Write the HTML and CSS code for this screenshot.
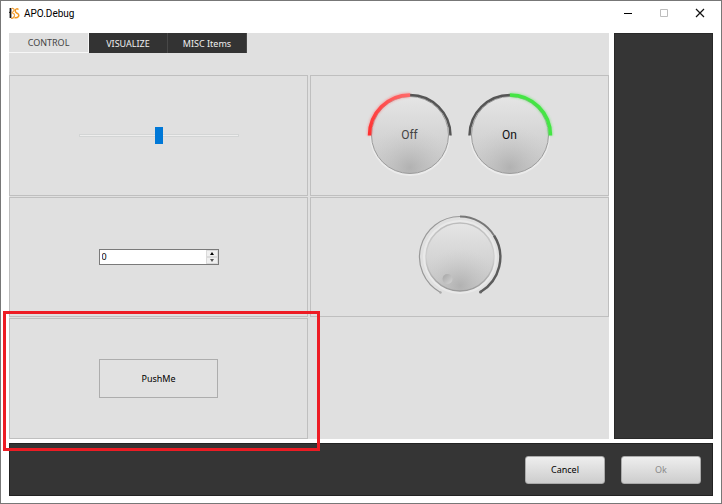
FILE: index.html
```html
<!DOCTYPE html>
<html lang="en">
<head>
<meta charset="utf-8">
<meta name="viewport" content="width=device-width, initial-scale=1">
<title>APO.Debug</title>
<link rel="stylesheet" href="styles.css">
</head>
<body>
<div class="window">
  <header class="titlebar">
    <svg class="logo" width="11" height="13" viewBox="0 0 11 13" aria-hidden="true">
      <path d="M1.500 1v10" stroke="#171717" stroke-width="1.800" fill="none"/>
      <path d="M0 5.500 1.500 5" stroke="#171717"/>
      <path d="M2.500 1.500Q5.500 .8 5 3.500L3 6Q6 6.500 5.500 9 4.500 11.500 2 11.500" fill="none" stroke="#f2a23c" stroke-width="1.200"/>
      <path d="M9.500 2.500Q7.500 1 6.300 3 5.800 5.300 8 6.200 10.500 7.500 9.500 9.500 7.500 11.500 5.500 10.500" fill="none" stroke="#f2981f" stroke-width="1.500"/>
    </svg>
    <h1 class="title">APO.Debug</h1>
    <div class="window-buttons">
      <button class="window-button" aria-label="Minimize"><svg width="10" height="10"><path d="M1 5.500h8" stroke="#000"/></svg></button>
      <button class="window-button" aria-label="Maximize" disabled><svg width="10" height="10"><path d="M1.500 1.500h7v7h-7z" fill="none" stroke="#bdbdbd"/></svg></button>
      <button class="window-button" aria-label="Close"><svg width="10" height="10"><path d="m1 1 8 8M9 1 1 9" stroke="#111" stroke-width="1.200"/></svg></button>
    </div>
  </header>

  <div class="workspace">
    <main class="panel">
      <div class="tabs" role="tablist">
        <button class="tab tab-active" role="tab" aria-selected="true">CONTROL</button>
        <button class="tab" role="tab" aria-selected="false">VISUALIZE</button>
        <button class="tab" role="tab" aria-selected="false">MISC Items</button>
      </div>
      <div class="grid">
        <section class="cell">
          <input class="slider" type="range" min="0" max="100" value="50" aria-label="Value">
        </section>
        <section class="cell cell-knobs">
          <button class="knob knob-off">
            <svg class="knob-art" viewBox="0 0 90 90" aria-hidden="true">
              <defs>
                <linearGradient id="face" x1="0" y1="0" x2="0" y2="1"><stop offset="0" stop-color="#e5e5e5"/><stop offset="1" stop-color="#c5c5c5"/></linearGradient>
                <radialGradient id="shade" cx=".5" cy=".92" r=".55"><stop offset="0" stop-color="#a8a8a8" stop-opacity=".7"/><stop offset="1" stop-color="#c8c8c8" stop-opacity="0"/></radialGradient>
                <linearGradient id="red" x1="0" y1="1" x2="1" y2="0"><stop offset="0" stop-color="#ff3030"/><stop offset="1" stop-color="#ff6868"/></linearGradient>
                <filter id="glow" x="-20%" y="-20%" width="140%" height="140%"><feGaussianBlur stdDeviation="1"/></filter>
              </defs>
              <circle cx="45" cy="46" r="40" fill="#ebebeb"/>
              <circle cx="45" cy="45" r="38.500" fill="url(#face)"/>
              <circle cx="45" cy="45" r="38.500" fill="url(#shade)" stroke="#9c9c9c"/>
              <path d="M45 5a40.500 40.500 0 0 1 40.500 40.500" fill="none" stroke="#555" stroke-width="2.500"/>
              <path d="M4.500 45.500A40.500 40.500 0 0 1 45 5" fill="none" stroke="#ff7070" stroke-width="5" opacity=".5" filter="url(#glow)"/>
              <path d="M4.500 45.500A40.500 40.500 0 0 1 45 5" fill="none" stroke="url(#red)" stroke-width="3.500"/>
            </svg>
            <span class="knob-label">Off</span>
          </button>
          <button class="knob knob-on">
            <svg class="knob-art" viewBox="0 0 90 90" aria-hidden="true">
              <circle cx="45" cy="46" r="40" fill="#ebebeb"/>
              <circle cx="45" cy="45" r="38.500" fill="url(#face)"/>
              <circle cx="45" cy="45" r="38.500" fill="url(#shade)" stroke="#9c9c9c"/>
              <path d="M4.500 45.500A40.500 40.500 0 0 1 45 5" fill="none" stroke="#555" stroke-width="2.500"/>
              <path d="M45 5a40.500 40.500 0 0 1 40.500 40.500" fill="none" stroke="#60e860" stroke-width="5" opacity=".5" filter="url(#glow)"/>
              <path d="M45 5a40.500 40.500 0 0 1 40.500 40.500" fill="none" stroke="#44e544" stroke-width="3.500"/>
            </svg>
            <span class="knob-label">On</span>
          </button>
        </section>
        <section class="cell">
          <div class="spinbox">
            <input class="spin-input" type="number" value="0" aria-label="Number">
            <div class="spin-buttons">
              <button class="spin-button" aria-label="Increase"><svg width="4" height="3"><path d="M0 3 2 0l2 3z" fill="#000"/></svg></button>
              <button class="spin-button" aria-label="Decrease"><svg width="4" height="3"><path d="m0 0 2 3 2-3z" fill="#555"/></svg></button>
            </div>
          </div>
        </section>
        <section class="cell">
          <div class="dial">
            <svg class="dial-art" viewBox="0 0 90 90" aria-hidden="true">
              <defs>
                <linearGradient id="rim" x1="0" y1="0" x2="0" y2="1"><stop offset="0" stop-color="#bcbcbc"/><stop offset=".5" stop-color="#d0d0d0"/><stop offset="1" stop-color="#999"/></linearGradient>
                <linearGradient id="dimple" x1="0" y1="0" x2="1" y2="1"><stop offset="0" stop-color="#a5a5a5"/><stop offset="1" stop-color="#d4d4d4"/></linearGradient>
              </defs>
              <circle cx="45" cy="45" r="37" fill="#e9e9e9"/>
              <circle cx="45" cy="45" r="34" fill="url(#face)"/>
              <circle cx="45" cy="45" r="34" fill="url(#shade)" stroke="url(#rim)" stroke-width="1.500"/>
              <circle cx="32.500" cy="67" r="5" fill="url(#dimple)"/>
              <path d="M25.500 80.500A40.500 40.500 0 0 1 45 4.500" fill="none" stroke="#999" stroke-width="1.200"/>
              <path d="M45 4.500A40.500 40.500 0 0 1 79 23.500" fill="none" stroke="#777" stroke-width="1.800"/>
              <path d="M79 23.500A40.500 40.500 0 0 1 65.500 80" fill="none" stroke="#5c5c5c" stroke-width="2.400"/>
              <circle cx="25.500" cy="80.500" r="1.200" fill="#aaa"/>
              <circle cx="65.500" cy="80" r="1.500" fill="#666"/>
            </svg>
            <input class="dial-input" type="range" min="0" max="100" value="0" aria-label="Dial">
          </div>
        </section>
        <section class="cell cell-marked">
          <button class="push">PushMe</button>
        </section>
      </div>
    </main>
    <aside class="sidebar"></aside>
  </div>

  <footer class="footer">
    <button class="action">Cancel</button>
    <button class="action" disabled>Ok</button>
  </footer>
</div>
</body>
</html>
```
FILE: styles.css
```css
* {
  box-sizing: border-box;
}

body {
  margin: 0;
  font-family: "Noto Sans", "Open Sans", sans-serif;
  font-size: 9px;
  color: #000;
}

button,
input {
  margin: 0;
  padding: 0;
  border: 0;
  font: inherit;
  color: inherit;
}

svg {
  display: block;
}

.window {
  display: flex;
  flex-direction: column;
  min-height: 100vh;
  padding: 0 8px 7px;
  border: 1px solid #777;
  background: #fff;
}

.titlebar {
  display: flex;
  align-items: center;
  height: 32px;
  padding-bottom: 8px;
  gap: 4px;
}

.title {
  flex: 1;
  margin: 0;
  font-family: Roboto, sans-serif;
  font-size: 10px;
  font-weight: 400;
}

.window-buttons {
  display: flex;
  gap: 10px;
}

.window-button {
  display: grid;
  place-items: center;
  width: 26px;
  height: 24px;
  background: none;
}

.workspace {
  display: flex;
  flex: 1;
  gap: 5px;
}

.panel {
  display: flex;
  flex: 1;
  flex-direction: column;
  gap: 22px;
  background: #e0e0e0;
}

.sidebar {
  flex: 0 0 99px;
  border: 1px solid #292929;
  background: #353535;
}

.tabs {
  display: flex;
}

.tab {
  width: 79px;
  height: 20px;
  border-right: 1px solid #484848;
  background: #333;
  color: #eee;
}

.tab-active {
  width: 80px;
  border: 1px solid #f7f7f7;
  border-width: 0 1px 1px 0;
  background: #e0e0e0;
  color: #444;
}

.grid {
  display: grid;
  flex: 1;
  grid-template-columns: 1fr 1fr;
  grid-template-rows: repeat(3, 1fr);
  gap: 1px 2px;
}

.cell {
  display: flex;
  align-items: center;
  justify-content: center;
  border: 1px solid #bfbfbf;
}

.cell-knobs {
  gap: 10px;
}

.cell-marked {
  position: relative;
}

.cell-marked::after {
  content: "";
  position: absolute;
  inset: -8px -13px -13px -7px;
  border: 3px solid #ed1c24;
  pointer-events: none;
}

.slider {
  width: 160px;
  height: 18px;
  appearance: none;
  background: none;
}

.slider::-webkit-slider-runnable-track {
  height: 3px;
  border: 1px solid #d3d5d5;
  background: #eee;
}

.slider::-webkit-slider-thumb {
  width: 8px;
  height: 17px;
  margin-top: -8px;
  appearance: none;
  background: #0078d7;
}

.knob {
  display: grid;
  place-items: center;
  width: 90px;
  height: 90px;
  background: none;
  font-family: Roboto, sans-serif;
  font-size: 12px;
}

.knob-art,
.knob-label {
  grid-area: 1 / 1;
}

.knob-art {
  width: 90px;
  height: 90px;
}

.knob-off {
  color: #444;
}

.knob-on {
  color: #111;
}

.spinbox {
  display: flex;
  width: 120px;
  height: 16px;
  border: 1px solid #7a7a7a;
  background: #fff;
}

.spin-input {
  flex: 1;
  min-width: 0;
  padding: 0 2px;
  appearance: textfield;
  background: none;
}

.spin-input::-webkit-inner-spin-button {
  appearance: none;
}

.spin-buttons {
  display: flex;
  flex-direction: column;
  width: 12px;
}

.spin-button {
  display: grid;
  flex: 1;
  place-items: center;
  border: 1px solid #dadada;
  background: #f0f0f0;
}

.dial {
  position: relative;
  width: 90px;
  height: 90px;
}

.dial-input {
  position: absolute;
  inset: 0;
  width: 100%;
  height: 100%;
  opacity: 0;
}

.push {
  width: 119px;
  height: 39px;
  border: 1px solid #adadad;
  background: #e1e1e1;
}

.footer {
  display: flex;
  align-items: center;
  justify-content: flex-end;
  height: 53px;
  margin-top: 4px;
  padding: 0 11px;
  gap: 16px;
  border: 1px solid #222;
  background: #353535;
}

.action {
  width: 80px;
  height: 28px;
  border: 1px solid #aaa;
  border-radius: 3px;
  background: linear-gradient(#eee, #cdcdcd);
}

.action:disabled {
  color: #8a8a8a;
}
```
